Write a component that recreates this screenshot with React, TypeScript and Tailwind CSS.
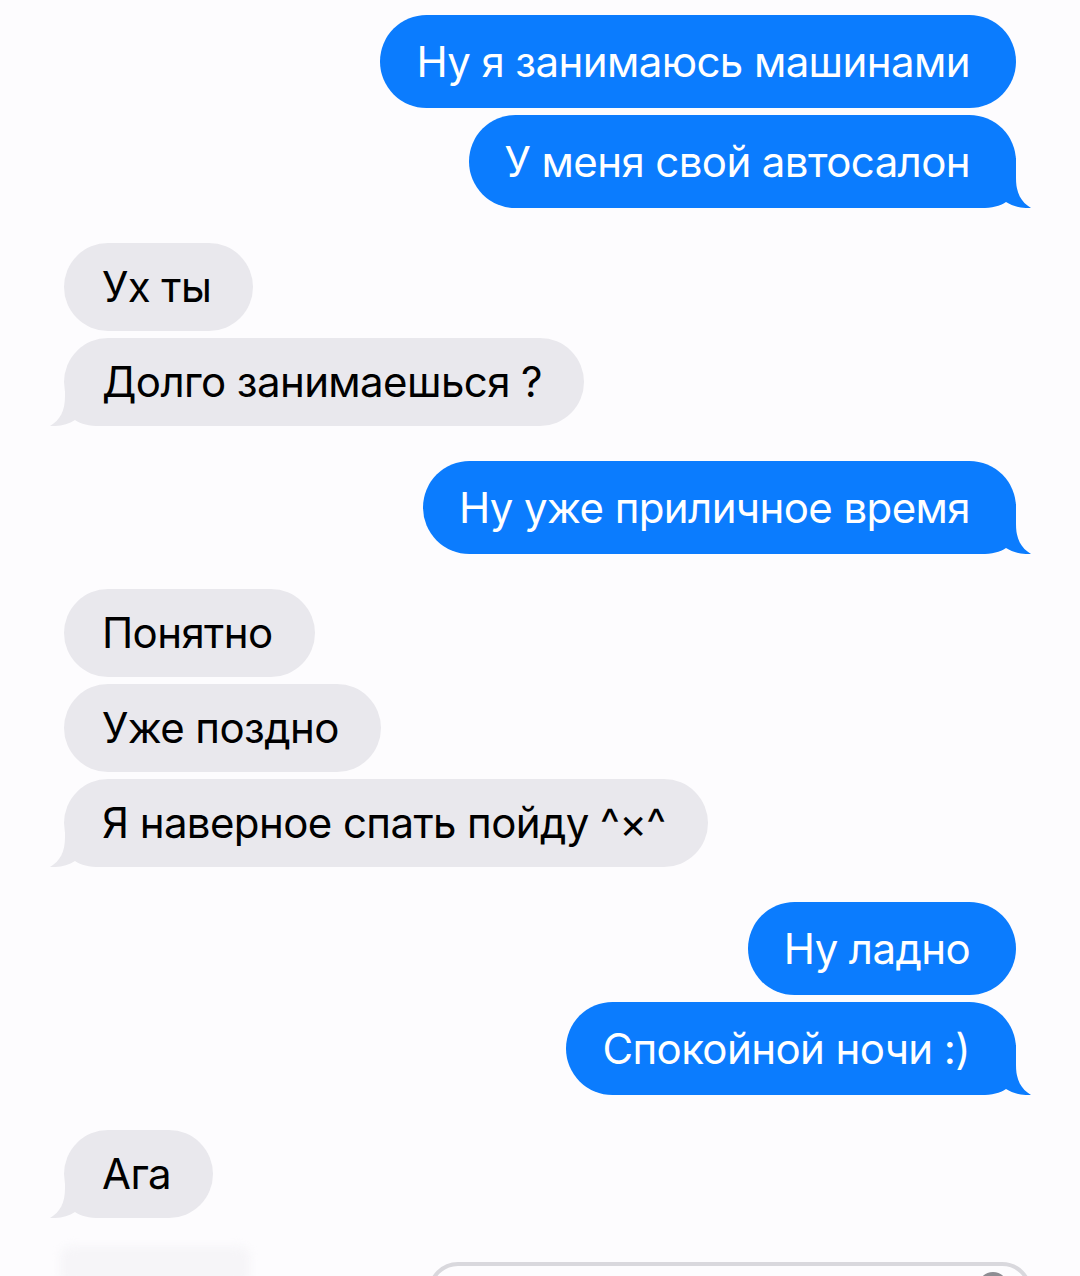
import React from "react";

type Msg = { text: string; tail?: boolean };
type Group = { me: boolean; items: Msg[] };

const groups: Group[] = [
  {
    me: true,
    items: [
      { text: "Ну я занимаюсь машинами" },
      { text: "У меня свой автосалон", tail: true },
    ],
  },
  {
    me: false,
    items: [{ text: "Ух ты" }, { text: "Долго занимаешься ?", tail: true }],
  },
  { me: true, items: [{ text: "Ну уже приличное время", tail: true }] },
  {
    me: false,
    items: [
      { text: "Понятно" },
      { text: "Уже поздно" },
      { text: "Я наверное спать пойду ^×^", tail: true },
    ],
  },
  {
    me: true,
    items: [{ text: "Ну ладно" }, { text: "Спокойной ночи :)", tail: true }],
  },
  { me: false, items: [{ text: "Ага", tail: true }] },
];

function Tail({ me }: { me: boolean }) {
  // corner piece that replaces the rounded corner with the speech tail
  return (
    <svg
      width="62"
      height="50"
      viewBox="0 0 62 50"
      className={
        me
          ? "absolute bottom-0 right-[-15px]"
          : "absolute bottom-0 left-[-14px] -scale-x-100"
      }
    >
      <path
        d="M0 0 H47 V20 C47 35 52 44 62 50 C53 50.5 44 48.5 37 44 C31 48 23 50 12 50 H0 Z"
        fill={me ? "#0b7cfe" : "#e9e8ed"}
      />
    </svg>
  );
}

function Bubble({ me, msg }: { me: boolean; msg: Msg }) {
  return (
    <div
      className={
        me
          ? "relative flex h-[93px] items-center rounded-[47px] bg-[#0b7cfe] pl-[36px] pr-[46px] text-white"
          : "relative flex h-[88px] items-center rounded-[44px] bg-[#e9e8ed] pl-[38px] pr-[42px] text-black"
      }
    >
      {msg.tail && <Tail me={me} />}
      <span className="relative whitespace-nowrap text-[42px] leading-none tracking-[-0.6px]">
        {msg.text}
      </span>
    </div>
  );
}

export default function App() {
  return (
    <div
      className="flex h-[1276px] w-[1080px] flex-col overflow-hidden bg-[#fdfcfe] pt-[15px]"
      style={{ fontFamily: "Inter, 'Noto Sans', sans-serif" }}
    >
      <div className="flex flex-col gap-[35px] px-[64px]">
        {groups.map((g, i) => (
          <div
            key={i}
            className={
              g.me
                ? "flex flex-col items-end gap-[7px]"
                : "flex flex-col items-start gap-[7px]"
            }
          >
            {g.items.map((m, j) => (
              <Bubble key={j} me={g.me} msg={m} />
            ))}
          </div>
        ))}
      </div>

      {/* bottom bar: faded app strip button and the message field */}
      <div className="mt-auto flex h-[36px] shrink-0 items-start">
        <div className="ml-[60px] mt-[6px] h-[40px] w-[190px] shrink-0 rounded-[12px] bg-[#f6f5f8] blur-[4px]" />
        <div className="ml-[178px] mt-[22px] flex h-[60px] w-[604px] shrink-0 justify-end rounded-[34px] border-[4px] border-[#d9d8dd] pr-[20px] pt-[6px]">
          <div className="h-[30px] w-[30px] rounded-full bg-[#8e8d93]" />
        </div>
      </div>
    </div>
  );
}
